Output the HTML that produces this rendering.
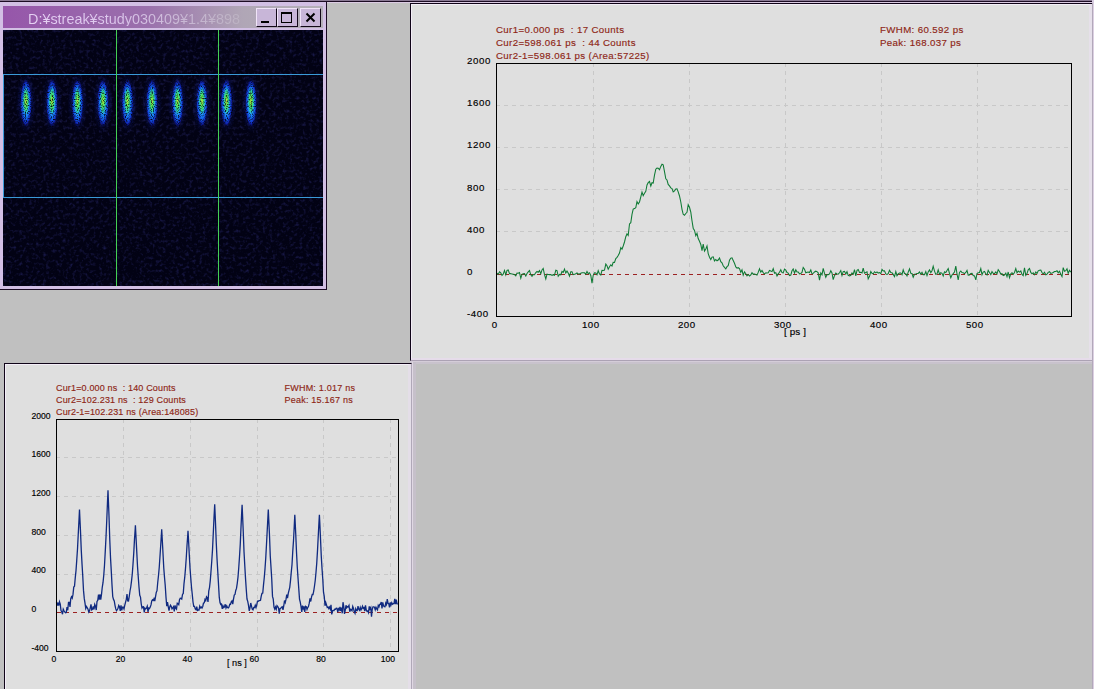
<!DOCTYPE html>
<html><head><meta charset="utf-8"><style>
*{margin:0;padding:0;box-sizing:border-box}
html,body{width:1094px;height:689px;overflow:hidden;background:#c0c0c0;font-family:"Liberation Sans",sans-serif}
.a{position:absolute}
.t{position:absolute;white-space:pre;line-height:1}
.red{color:#8e2616;-webkit-text-stroke:0.15px #8e2616}
.blk{color:#000;-webkit-text-stroke:0.15px #000}
</style></head><body>
<div class="a" style="left:0;top:0;width:1092px;height:1px;background:#8a7a94"></div><div class="a" style="left:1092px;top:0;width:2px;height:5px;background:#d8cce0"></div><div class="a" style="left:0;top:1px;width:1092px;height:1px;background:#1c0c24"></div><div class="a" style="left:0;top:2px;width:1092px;height:1px;background:#dccce4"></div><div class="a" style="left:0;top:2px;width:327px;height:288px;background:#d2bfe4;border-right:1px solid #1a0a22;border-bottom:1px solid #1a0a22"></div><div class="a" style="left:3px;top:6px;width:320px;height:22px;background:linear-gradient(90deg,#9656aa 0%,#9a70ac 45%,#b0a6b6 75%,#b4b0b8 100%)"></div><div class="t" style="left:28px;top:11.5px;font-size:14.4px;color:transparent;background:linear-gradient(90deg,#e6d2f4 0%,#dcc6ec 40%,#cab8d6 70%,#bcb2c2 100%);-webkit-background-clip:text;background-clip:text">D:¥streak¥study030409¥1.4¥898</div><div class="a" style="left:256px;top:8px;width:21px;height:19px;background:#c8b6d8;border-top:1px solid #f0e4f8;border-left:1px solid #f0e4f8;border-right:1px solid #120818;border-bottom:1px solid #120818"></div><div class="a" style="left:277px;top:8px;width:21px;height:19px;background:#c8b6d8;border-top:1px solid #f0e4f8;border-left:1px solid #f0e4f8;border-right:1px solid #120818;border-bottom:1px solid #120818"></div><div class="a" style="left:300px;top:8px;width:21px;height:19px;background:#c8b6d8;border-top:1px solid #f0e4f8;border-left:1px solid #f0e4f8;border-right:1px solid #120818;border-bottom:1px solid #120818"></div><div class="a" style="left:261px;top:21px;width:8px;height:2px;background:#000"></div><div class="a" style="left:281px;top:12px;width:11px;height:11px;border:1px solid #000;border-top-width:2px"></div><svg class="a" style="left:300px;top:8px" width="21" height="19"><path d="M6.5 5.5 L14.5 13.5 M14.5 5.5 L6.5 13.5" stroke="#000" stroke-width="2"/></svg><div class="a" style="left:3px;top:30px;width:320px;height:256px;background:#04031a;overflow:hidden"><svg width="320" height="256" style="position:absolute;left:0;top:0"><defs><radialGradient id="sg" cx="50%" cy="50%" r="50%"><stop offset="0" stop-color="#40d8ff"/><stop offset="0.35" stop-color="#28b0ff"/><stop offset="0.65" stop-color="#1468f0"/><stop offset="0.85" stop-color="#1028b8"/><stop offset="1" stop-color="#0a0a80" stop-opacity="0"/></radialGradient><radialGradient id="hg"><stop offset="0" stop-color="#1830d0" stop-opacity="0.6"/><stop offset="0.6" stop-color="#1428b0" stop-opacity="0.3"/><stop offset="1" stop-color="#1428b0" stop-opacity="0"/></radialGradient><radialGradient id="cg" cx="50%" cy="50%" r="50%"><stop offset="0" stop-color="#c8e838"/><stop offset="0.4" stop-color="#50e858"/><stop offset="0.75" stop-color="#30d890" stop-opacity="0.8"/><stop offset="1" stop-color="#20c0e0" stop-opacity="0"/></radialGradient><filter id="bgn" x="0" y="0" width="100%" height="100%"><feTurbulence type="fractalNoise" baseFrequency="0.3" numOctaves="2" seed="5" result="n"/><feColorMatrix in="n" type="matrix" values="0 0 0 0 0.03  0 0 0 0 0.03  0 0 0 0 0.22  1.2 0 0 0 -0.6"/></filter><filter id="spk" x="0" y="0" width="100%" height="100%"><feTurbulence type="fractalNoise" baseFrequency="0.85" numOctaves="1" seed="9" result="n"/><feColorMatrix in="n" type="matrix" values="0 0 0 0 1  0 0 0 0 1  0 0 0 0 1  3.2 0 0 0 -0.75"/></filter><mask id="mk" maskUnits="userSpaceOnUse" x="0" y="0" width="320" height="256"><rect width="320" height="256" fill="#fff" filter="url(#spk)"/></mask></defs><rect width="320" height="256" fill="#020214"/><rect width="320" height="256" filter="url(#bgn)"/><g mask="url(#mk)"><ellipse cx="23" cy="73" rx="10" ry="30" fill="url(#hg)"/><ellipse cx="23" cy="73" rx="5.8" ry="24" fill="url(#sg)"/><ellipse cx="23" cy="71" rx="3.2" ry="14" fill="url(#cg)"/><ellipse cx="49" cy="73" rx="10" ry="30" fill="url(#hg)"/><ellipse cx="49" cy="73" rx="5.8" ry="24" fill="url(#sg)"/><ellipse cx="49" cy="71" rx="3.2" ry="14" fill="url(#cg)"/><ellipse cx="74.5" cy="73" rx="10" ry="30" fill="url(#hg)"/><ellipse cx="74.5" cy="73" rx="5.8" ry="24" fill="url(#sg)"/><ellipse cx="74.5" cy="71" rx="3.2" ry="14" fill="url(#cg)"/><ellipse cx="100" cy="73" rx="10" ry="30" fill="url(#hg)"/><ellipse cx="100" cy="73" rx="5.8" ry="24" fill="url(#sg)"/><ellipse cx="100" cy="71" rx="3.2" ry="14" fill="url(#cg)"/><ellipse cx="124.5" cy="73" rx="10" ry="30" fill="url(#hg)"/><ellipse cx="124.5" cy="73" rx="5.8" ry="24" fill="url(#sg)"/><ellipse cx="124.5" cy="71" rx="3.2" ry="14" fill="url(#cg)"/><ellipse cx="149" cy="73" rx="10" ry="30" fill="url(#hg)"/><ellipse cx="149" cy="73" rx="5.8" ry="24" fill="url(#sg)"/><ellipse cx="149" cy="71" rx="3.2" ry="14" fill="url(#cg)"/><ellipse cx="174.5" cy="73" rx="10" ry="30" fill="url(#hg)"/><ellipse cx="174.5" cy="73" rx="5.8" ry="24" fill="url(#sg)"/><ellipse cx="174.5" cy="71" rx="3.2" ry="14" fill="url(#cg)"/><ellipse cx="199" cy="73" rx="10" ry="30" fill="url(#hg)"/><ellipse cx="199" cy="73" rx="5.8" ry="24" fill="url(#sg)"/><ellipse cx="199" cy="71" rx="3.2" ry="14" fill="url(#cg)"/><ellipse cx="223.5" cy="73" rx="10" ry="30" fill="url(#hg)"/><ellipse cx="223.5" cy="73" rx="5.8" ry="24" fill="url(#sg)"/><ellipse cx="223.5" cy="71" rx="3.2" ry="14" fill="url(#cg)"/><ellipse cx="248" cy="73" rx="10" ry="30" fill="url(#hg)"/><ellipse cx="248" cy="73" rx="5.8" ry="24" fill="url(#sg)"/><ellipse cx="248" cy="71" rx="3.2" ry="14" fill="url(#cg)"/></g><line x1="0" y1="44.5" x2="320" y2="44.5" stroke="#3a9ad8" stroke-width="1"/><line x1="0" y1="167.5" x2="320" y2="167.5" stroke="#3a9ad8" stroke-width="1"/><line x1="0.5" y1="44" x2="0.5" y2="168" stroke="#3a9ad8" stroke-width="1"/><line x1="113.5" y1="0" x2="113.5" y2="256" stroke="#44d054" stroke-width="1"/><line x1="215.5" y1="0" x2="215.5" y2="256" stroke="#44d054" stroke-width="1"/></svg></div><div class="a" style="left:410px;top:3px;width:682px;height:358px;background:#dfdfdf;border-left:1px solid #100418;border-top:1px solid #100418;border-bottom:1px solid #aca2b4"></div><div class="a" style="left:411px;top:4px;width:681px;height:356px;border-left:1px solid #f4eef8;border-top:1px solid #f4eef8;border-right:3px solid #e6e0ea;border-bottom:2px solid #e6dcea"></div><div class="a" style="left:410px;top:361px;width:682px;height:1px;background:#d4ccd8"></div><div class="a" style="left:410px;top:362px;width:682px;height:2px;background:#c8c2cc"></div><div class="a" style="left:1092px;top:3px;width:1px;height:686px;background:#b2a8ba"></div><div class="a" style="left:1093px;top:3px;width:1px;height:686px;background:#dcd0e2"></div><div class="a" style="left:4px;top:363px;width:408px;height:330px;background:#dfdfdf;border-left:1px solid #100418;border-top:1px solid #100418;border-right:1px solid #b0a8b8"></div><div class="a" style="left:5px;top:364px;width:406px;height:330px;border-left:1px solid #f4eef8;border-top:1px solid #f4eef8;border-right:3px solid #e4dee8"></div><div class="a" style="left:412px;top:362px;width:1px;height:330px;background:#e0d8e4"></div><div class="a" style="left:413px;top:362px;width:3px;height:330px;background:#c6c0ca"></div><div class="t red" style="left:496px;top:25.2px;font-size:9.7px;letter-spacing:0.37px">Cur1=0.000 ps  : 17 Counts</div><div class="t red" style="left:496px;top:38.0px;font-size:9.7px;letter-spacing:0.37px">Cur2=598.061 ps  : 44 Counts</div><div class="t red" style="left:496px;top:50.8px;font-size:9.7px;letter-spacing:0.37px">Cur2-1=598.061 ps (Area:57225)</div><div class="t red" style="left:880px;top:25.2px;font-size:9.7px;letter-spacing:0.37px">FWHM: 60.592 ps</div><div class="t red" style="left:880px;top:38.0px;font-size:9.7px;letter-spacing:0.37px">Peak: 168.037 ps</div><svg class="a" style="left:0;top:0" width="1094" height="689"><line x1="593.5" y1="63" x2="593.5" y2="316" stroke="#c8c8c8" stroke-dasharray="4 4"/><line x1="689.5" y1="63" x2="689.5" y2="316" stroke="#c8c8c8" stroke-dasharray="4 4"/><line x1="785.5" y1="63" x2="785.5" y2="316" stroke="#c8c8c8" stroke-dasharray="4 4"/><line x1="881.5" y1="63" x2="881.5" y2="316" stroke="#c8c8c8" stroke-dasharray="4 4"/><line x1="977.5" y1="63" x2="977.5" y2="316" stroke="#c8c8c8" stroke-dasharray="4 4"/><line x1="496" y1="105.5" x2="1071" y2="105.5" stroke="#c8c8c8" stroke-dasharray="4 4"/><line x1="496" y1="147.5" x2="1071" y2="147.5" stroke="#c8c8c8" stroke-dasharray="4 4"/><line x1="496" y1="189.5" x2="1071" y2="189.5" stroke="#c8c8c8" stroke-dasharray="4 4"/><line x1="496" y1="231.5" x2="1071" y2="231.5" stroke="#c8c8c8" stroke-dasharray="4 4"/><line x1="497" y1="274.5" x2="1071" y2="274.5" stroke="#9c2222" stroke-dasharray="4 4"/><polyline fill="none" stroke="#0e7a34" stroke-width="1.05" points="497.0,273.0 498.2,274.4 499.5,271.8 500.8,272.9 502.0,275.4 503.2,274.2 504.5,270.4 505.8,274.8 507.0,270.4 508.2,269.9 509.5,273.7 510.8,273.5 512.0,274.1 513.2,274.3 514.5,274.6 515.8,275.9 517.0,273.1 518.2,273.2 519.5,272.6 520.8,278.3 522.0,274.4 523.2,273.8 524.5,273.6 525.8,276.0 527.0,273.5 528.2,271.9 529.5,270.6 530.8,274.8 532.0,276.4 533.2,274.5 534.5,274.7 535.8,272.5 537.0,271.5 538.2,272.3 539.5,270.6 540.8,273.7 542.0,269.9 543.2,268.4 544.5,274.7 545.8,279.0 547.0,274.2 548.2,274.4 549.5,274.6 550.8,274.6 552.0,275.4 553.2,274.7 554.5,275.2 555.8,270.2 557.0,270.7 558.2,276.3 559.5,274.4 560.8,274.8 562.0,271.5 563.2,272.5 564.5,269.1 565.8,273.1 567.0,271.1 568.2,273.0 569.5,276.1 570.8,271.8 572.0,271.8 573.2,274.6 574.5,274.3 575.8,273.8 577.0,273.0 578.2,274.0 579.5,274.0 580.8,273.3 582.0,272.8 583.2,272.7 584.5,272.8 585.8,274.2 587.0,271.4 588.2,273.7 589.5,272.7 590.8,275.5 592.0,283.2 593.2,275.3 594.5,272.8 595.8,272.9 597.0,274.8 598.2,270.7 599.5,274.0 600.8,275.0 602.0,270.3 603.2,270.4 604.5,270.1 605.8,264.1 607.0,265.8 608.2,269.2 609.5,266.7 610.8,264.8 612.0,266.0 613.2,262.3 614.5,262.5 615.8,258.6 617.0,257.3 618.2,255.6 619.5,253.1 620.8,247.6 622.0,249.1 623.2,246.0 624.5,242.0 625.8,236.7 627.0,233.9 628.2,235.5 629.5,223.9 630.8,222.7 632.0,214.4 633.2,209.1 634.5,208.6 635.8,207.6 637.0,201.5 638.2,203.9 639.5,202.0 640.8,196.8 642.0,192.1 643.2,195.7 644.5,193.3 645.8,191.3 647.0,184.9 648.2,182.7 649.5,181.5 650.8,186.0 652.0,182.7 653.2,183.1 654.5,175.2 655.8,169.2 657.0,168.1 658.2,168.2 659.5,169.7 660.8,166.4 662.0,164.2 663.2,164.9 664.5,171.6 665.8,178.8 667.0,180.0 668.2,184.4 669.5,185.9 670.8,187.9 672.0,188.6 673.2,192.0 674.5,191.0 675.8,189.0 677.0,188.8 678.2,191.9 679.5,196.0 680.8,202.0 682.0,209.3 683.2,214.3 684.5,215.2 685.8,213.5 687.0,212.3 688.2,204.7 689.5,207.2 690.8,212.1 692.0,220.7 693.2,228.2 694.5,230.4 695.8,235.7 697.0,233.3 698.2,238.6 699.5,241.3 700.8,244.5 702.0,250.7 703.2,244.2 704.5,251.1 705.8,248.9 707.0,246.0 708.2,253.6 709.5,257.2 710.8,259.6 712.0,257.1 713.2,256.9 714.5,260.9 715.8,259.5 717.0,260.8 718.2,260.0 719.5,258.0 720.8,261.6 722.0,262.9 723.2,265.7 724.5,267.4 725.8,268.9 727.0,266.7 728.2,265.7 729.5,260.2 730.8,258.1 732.0,257.8 733.2,260.5 734.5,263.3 735.8,266.9 737.0,268.2 738.2,267.7 739.5,268.5 740.8,272.3 742.0,269.8 743.2,275.1 744.5,271.8 745.8,273.8 747.0,275.8 748.2,274.5 749.5,276.1 750.8,275.0 752.0,272.7 753.2,274.1 754.5,274.0 755.8,274.5 757.0,275.1 758.2,272.4 759.5,268.7 760.8,272.1 762.0,270.5 763.2,272.6 764.5,274.0 765.8,272.7 767.0,272.9 768.2,272.7 769.5,270.5 770.8,271.1 772.0,271.6 773.2,268.6 774.5,273.2 775.8,272.6 777.0,276.0 778.2,273.9 779.5,272.3 780.8,269.7 782.0,272.6 783.2,272.8 784.5,269.1 785.8,270.2 787.0,272.5 788.2,273.1 789.5,275.5 790.8,275.1 792.0,270.8 793.2,268.9 794.5,273.2 795.8,269.7 797.0,272.0 798.2,272.0 799.5,273.9 800.8,273.5 802.0,272.4 803.2,267.5 804.5,269.3 805.8,272.8 807.0,272.2 808.2,272.0 809.5,272.5 810.8,269.9 812.0,273.8 813.2,273.4 814.5,272.0 815.8,271.2 817.0,271.6 818.2,272.8 819.5,280.2 820.8,272.9 822.0,274.8 823.2,268.4 824.5,273.4 825.8,277.3 827.0,274.6 828.2,274.7 829.5,273.9 830.8,270.8 832.0,273.0 833.2,279.7 834.5,275.7 835.8,273.0 837.0,273.9 838.2,274.2 839.5,272.8 840.8,270.6 842.0,275.5 843.2,271.7 844.5,271.3 845.8,274.0 847.0,271.7 848.2,275.3 849.5,276.0 850.8,275.3 852.0,273.0 853.2,274.3 854.5,269.7 855.8,275.9 857.0,270.3 858.2,269.5 859.5,272.4 860.8,272.3 862.0,272.9 863.2,268.2 864.5,273.3 865.8,272.5 867.0,271.9 868.2,278.8 869.5,276.3 870.8,271.5 872.0,273.3 873.2,273.9 874.5,271.7 875.8,272.8 877.0,271.9 878.2,273.1 879.5,272.5 880.8,273.6 882.0,269.4 883.2,270.9 884.5,270.8 885.8,273.9 887.0,274.5 888.2,273.7 889.5,270.3 890.8,272.6 892.0,272.8 893.2,274.4 894.5,276.7 895.8,271.5 897.0,275.7 898.2,273.9 899.5,273.0 900.8,273.0 902.0,274.7 903.2,269.8 904.5,273.5 905.8,273.7 907.0,275.9 908.2,272.1 909.5,268.9 910.8,273.2 912.0,273.5 913.2,277.2 914.5,274.3 915.8,274.1 917.0,273.6 918.2,273.4 919.5,271.9 920.8,274.3 922.0,272.3 923.2,274.8 924.5,274.7 925.8,271.6 927.0,275.6 928.2,271.9 929.5,269.9 930.8,272.6 932.0,270.7 933.2,266.2 934.5,271.1 935.8,274.4 937.0,273.9 938.2,269.9 939.5,274.1 940.8,272.6 942.0,273.3 943.2,276.0 944.5,271.8 945.8,272.6 947.0,270.4 948.2,268.5 949.5,273.5 950.8,277.8 952.0,275.0 953.2,273.6 954.5,272.0 955.8,266.1 957.0,273.8 958.2,279.8 959.5,272.4 960.8,271.0 962.0,272.5 963.2,272.8 964.5,273.6 965.8,272.4 967.0,270.4 968.2,275.1 969.5,274.9 970.8,273.4 972.0,273.3 973.2,275.5 974.5,275.9 975.8,279.9 977.0,273.5 978.2,272.8 979.5,272.5 980.8,268.5 982.0,274.7 983.2,272.1 984.5,271.4 985.8,273.8 987.0,275.0 988.2,270.4 989.5,272.5 990.8,274.6 992.0,271.6 993.2,273.3 994.5,273.6 995.8,272.0 997.0,273.8 998.2,269.6 999.5,271.4 1000.8,274.0 1002.0,273.6 1003.2,275.5 1004.5,275.0 1005.8,273.1 1007.0,276.6 1008.2,272.0 1009.5,277.8 1010.8,273.8 1012.0,272.7 1013.2,274.3 1014.5,272.5 1015.8,268.6 1017.0,272.8 1018.2,271.1 1019.5,272.1 1020.8,271.0 1022.0,274.4 1023.2,275.7 1024.5,267.9 1025.8,275.4 1027.0,273.6 1028.2,269.8 1029.5,268.5 1030.8,272.4 1032.0,273.8 1033.2,272.8 1034.5,274.7 1035.8,272.0 1037.0,273.5 1038.2,270.8 1039.5,270.2 1040.8,270.0 1042.0,272.5 1043.2,274.0 1044.5,272.3 1045.8,274.7 1047.0,274.1 1048.2,272.4 1049.5,271.6 1050.8,273.3 1052.0,273.0 1053.2,272.5 1054.5,271.6 1055.8,271.4 1057.0,270.7 1058.2,272.8 1059.5,271.2 1060.8,274.2 1062.0,276.5 1063.2,267.6 1064.5,271.3 1065.8,270.7 1067.0,268.8 1068.2,273.3 1069.5,270.3 1070.8,272.1"/><rect x="496.5" y="63.5" width="575" height="253" fill="none" stroke="#000"/></svg><div class="t blk" style="left:467px;top:56.0px;font-size:9.7px;letter-spacing:0.6px">2000</div><div class="t blk" style="left:467px;top:98.2px;font-size:9.7px;letter-spacing:0.6px">1600</div><div class="t blk" style="left:467px;top:140.3px;font-size:9.7px;letter-spacing:0.6px">1200</div><div class="t blk" style="left:467px;top:182.5px;font-size:9.7px;letter-spacing:0.6px">800</div><div class="t blk" style="left:467px;top:224.7px;font-size:9.7px;letter-spacing:0.6px">400</div><div class="t blk" style="left:467px;top:266.9px;font-size:9.7px;letter-spacing:0.6px">0</div><div class="t blk" style="left:467px;top:309.0px;font-size:9.7px;letter-spacing:0.6px">-400</div><div class="t blk" style="left:464.5px;width:60px;text-align:center;top:319.6px;font-size:9.7px;letter-spacing:0.5px;text-indent:0.5px">0</div><div class="t blk" style="left:560.5px;width:60px;text-align:center;top:319.6px;font-size:9.7px;letter-spacing:0.5px;text-indent:0.5px">100</div><div class="t blk" style="left:656.5px;width:60px;text-align:center;top:319.6px;font-size:9.7px;letter-spacing:0.5px;text-indent:0.5px">200</div><div class="t blk" style="left:752.5px;width:60px;text-align:center;top:319.6px;font-size:9.7px;letter-spacing:0.5px;text-indent:0.5px">300</div><div class="t blk" style="left:848.5px;width:60px;text-align:center;top:319.6px;font-size:9.7px;letter-spacing:0.5px;text-indent:0.5px">400</div><div class="t blk" style="left:944.5px;width:60px;text-align:center;top:319.6px;font-size:9.7px;letter-spacing:0.5px;text-indent:0.5px">500</div><div class="t blk" style="left:784px;top:326.8px;font-size:9.9px;letter-spacing:0.1px">[ ps ]</div><div class="t red" style="left:56px;top:384.2px;font-size:9.0px;letter-spacing:0.16px">Cur1=0.000 ns  : 140 Counts</div><div class="t red" style="left:56px;top:396.1px;font-size:9.0px;letter-spacing:0.16px">Cur2=102.231 ns  : 129 Counts</div><div class="t red" style="left:56px;top:408.0px;font-size:9.0px;letter-spacing:0.16px">Cur2-1=102.231 ns (Area:148085)</div><div class="t red" style="left:284.5px;top:384.2px;font-size:9.0px;letter-spacing:0.22px">FWHM: 1.017 ns</div><div class="t red" style="left:284.5px;top:396.1px;font-size:9.0px;letter-spacing:0.22px">Peak: 15.167 ns</div><svg class="a" style="left:0;top:0" width="1094" height="689"><line x1="123.5" y1="419" x2="123.5" y2="651" stroke="#c8c8c8" stroke-dasharray="4 4"/><line x1="190.5" y1="419" x2="190.5" y2="651" stroke="#c8c8c8" stroke-dasharray="4 4"/><line x1="257.5" y1="419" x2="257.5" y2="651" stroke="#c8c8c8" stroke-dasharray="4 4"/><line x1="323.5" y1="419" x2="323.5" y2="651" stroke="#c8c8c8" stroke-dasharray="4 4"/><line x1="390.5" y1="419" x2="390.5" y2="651" stroke="#c8c8c8" stroke-dasharray="4 4"/><line x1="56" y1="457.5" x2="398" y2="457.5" stroke="#c8c8c8" stroke-dasharray="4 4"/><line x1="56" y1="496.5" x2="398" y2="496.5" stroke="#c8c8c8" stroke-dasharray="4 4"/><line x1="56" y1="535.5" x2="398" y2="535.5" stroke="#c8c8c8" stroke-dasharray="4 4"/><line x1="56" y1="574.5" x2="398" y2="574.5" stroke="#c8c8c8" stroke-dasharray="4 4"/><line x1="57" y1="612.5" x2="398" y2="612.5" stroke="#9c2222" stroke-dasharray="4 4"/><polyline fill="none" stroke="#102a80" stroke-width="1.3" points="56.50,601.9 57.25,605.6 58.00,602.6 58.75,605.7 59.50,601.9 60.25,604.2 61.00,610.5 61.75,611.8 62.50,614.2 63.25,609.2 64.00,610.8 64.75,611.9 65.50,612.8 66.25,612.6 67.00,607.0 67.75,610.3 68.50,602.3 69.25,602.3 70.00,607.0 70.75,598.7 71.50,596.7 72.25,598.1 73.00,594.4 73.75,587.1 74.50,586.2 75.25,577.9 76.00,570.6 76.75,560.1 77.50,549.0 78.25,534.1 79.00,519.7 79.50,509.5 79.75,515.2 80.50,531.4 81.25,549.9 82.00,563.6 82.75,576.0 83.50,590.4 84.25,598.4 85.00,603.2 85.75,608.4 86.50,606.5 87.25,607.7 88.00,609.2 88.75,612.2 89.50,611.0 90.25,607.8 91.00,604.4 91.75,609.9 92.50,609.2 93.25,606.3 94.00,609.5 94.75,604.4 95.50,606.2 96.25,610.0 97.00,601.5 97.75,600.4 98.50,594.5 99.25,599.7 100.00,594.4 100.75,599.7 101.50,594.4 102.25,587.3 103.00,582.7 103.75,575.2 104.50,565.2 105.25,551.6 106.00,537.2 106.75,520.5 107.50,501.9 108.00,490.3 108.25,496.9 109.00,516.0 109.75,539.2 110.50,557.4 111.25,570.6 112.00,585.0 112.75,596.7 113.50,599.4 114.25,600.9 115.00,605.3 115.75,608.9 116.50,610.7 117.25,609.6 118.00,608.2 118.75,605.4 119.50,606.7 120.25,610.9 121.00,605.4 121.75,610.3 122.50,607.1 123.25,607.1 124.00,609.0 124.75,605.4 125.50,602.4 126.25,599.6 127.00,594.1 127.75,600.8 128.50,600.9 129.25,596.3 130.00,591.0 130.75,587.0 131.50,581.2 132.25,574.2 133.00,564.3 133.75,553.1 134.50,539.1 135.25,528.2 135.40,525.3 136.00,536.9 136.75,551.6 137.50,566.2 138.25,577.0 139.00,587.1 139.75,595.3 140.50,597.1 141.25,604.0 142.00,608.0 142.75,606.9 143.50,606.8 144.25,612.4 145.00,608.1 145.75,608.9 146.50,608.1 147.25,606.2 148.00,611.8 148.75,608.1 149.50,608.6 150.25,607.1 151.00,604.9 151.75,601.0 152.50,599.8 153.25,600.4 154.00,598.6 154.75,601.1 155.50,596.8 156.25,592.5 157.00,590.7 157.75,582.2 158.50,575.5 159.25,567.2 160.00,556.0 160.75,544.7 161.50,532.9 161.70,529.2 162.25,539.3 163.00,553.5 163.75,567.7 164.50,577.2 165.25,585.8 166.00,597.4 166.75,606.1 167.50,602.1 168.25,606.6 169.00,610.6 169.75,607.0 170.50,605.2 171.25,606.6 172.00,608.8 172.75,607.8 173.50,606.7 174.25,611.5 175.00,605.3 175.75,608.2 176.50,609.1 177.25,603.2 178.00,603.6 178.75,604.6 179.50,599.6 180.25,598.2 181.00,598.4 181.75,599.0 182.50,594.4 183.25,593.4 184.00,583.6 184.75,577.2 185.50,568.4 186.25,558.0 187.00,545.5 187.75,535.4 188.00,530.9 188.50,539.2 189.25,554.3 190.00,567.8 190.75,577.9 191.50,587.2 192.25,594.3 193.00,602.0 193.75,606.4 194.50,606.4 195.25,608.9 196.00,609.7 196.75,606.7 197.50,610.5 198.25,610.0 199.00,610.0 199.75,606.2 200.50,607.9 201.25,607.1 202.00,608.0 202.75,606.5 203.50,603.0 204.25,602.8 205.00,599.4 205.75,600.6 206.50,596.8 207.25,597.8 208.00,602.0 208.75,591.1 209.50,587.6 210.25,580.9 211.00,571.2 211.75,561.3 212.50,549.9 213.25,533.9 214.00,517.7 214.70,504.4 214.75,505.5 215.50,522.7 216.25,542.4 217.00,558.4 217.75,571.3 218.50,584.1 219.25,597.2 220.00,602.5 220.75,604.6 221.50,604.1 222.25,608.8 223.00,605.9 223.75,607.6 224.50,606.8 225.25,604.3 226.00,607.9 226.75,606.0 227.50,607.6 228.25,608.0 229.00,606.9 229.75,604.2 230.50,604.4 231.25,601.9 232.00,600.9 232.75,604.1 233.50,599.2 234.25,595.1 235.00,594.5 235.75,590.4 236.50,588.4 237.25,583.3 238.00,577.1 238.75,567.8 239.50,556.8 240.25,544.4 241.00,527.1 241.75,511.4 242.10,504.8 242.50,513.9 243.25,531.7 244.00,551.6 244.75,565.0 245.50,578.1 246.25,589.2 247.00,599.0 247.75,601.3 248.50,605.4 249.25,610.8 250.00,607.8 250.75,603.0 251.50,606.1 252.25,609.2 253.00,609.9 253.75,607.5 254.50,607.6 255.25,605.3 256.00,607.5 256.75,604.8 257.50,601.1 258.25,601.2 259.00,600.6 259.75,600.6 260.50,600.2 261.25,596.1 262.00,593.3 262.75,593.0 263.50,584.9 264.25,577.8 265.00,568.9 265.75,558.0 266.50,544.3 267.25,529.9 268.00,515.2 268.30,509.5 268.75,519.4 269.50,535.5 270.25,555.8 271.00,567.3 271.75,579.3 272.50,596.4 273.25,599.1 274.00,607.2 274.75,609.1 275.50,607.0 276.25,609.2 277.00,605.6 277.75,606.5 278.50,608.0 279.25,613.6 280.00,608.7 280.75,608.2 281.50,607.3 282.25,606.8 283.00,609.8 283.75,606.0 284.50,600.5 285.25,602.5 286.00,599.4 286.75,594.6 287.50,598.2 288.25,593.4 289.00,590.3 289.75,587.3 290.50,580.6 291.25,572.2 292.00,564.7 292.75,551.5 293.50,540.8 294.25,526.3 294.80,514.8 295.00,518.6 295.75,534.3 296.50,552.0 297.25,566.7 298.00,577.7 298.75,588.4 299.50,599.1 300.25,602.1 301.00,606.4 301.75,612.0 302.50,605.7 303.25,608.6 304.00,606.4 304.75,611.9 305.50,606.3 306.25,606.7 307.00,609.4 307.75,607.6 308.50,606.3 309.25,603.2 310.00,598.4 310.75,601.5 311.50,597.1 312.25,594.5 313.00,594.6 313.75,591.0 314.50,586.0 315.25,580.3 316.00,572.3 316.75,563.1 317.50,550.6 318.25,536.0 319.00,521.9 319.40,514.8 319.75,521.8 320.50,538.6 321.25,555.7 322.00,568.3 322.75,578.7 323.50,592.2 324.25,596.4 325.00,605.8 325.75,602.5 326.50,604.9 327.25,607.5 328.00,607.0 328.75,608.5 329.50,607.1 330.25,609.1 331.00,604.9 331.75,614.4 332.50,610.7 333.25,610.4 334.00,610.6 334.75,609.1 335.50,609.2 336.25,608.3 337.00,608.4 337.75,612.0 338.50,608.8 339.25,609.9 340.00,606.8 340.75,611.0 341.50,607.7 342.25,613.3 343.00,602.2 343.75,606.3 344.50,614.0 345.25,610.1 346.00,605.3 346.75,607.8 347.50,606.6 348.25,606.9 349.00,605.4 349.75,611.7 350.50,609.3 351.25,609.8 352.00,610.7 352.75,606.4 353.50,608.4 354.25,611.8 355.00,613.4 355.75,608.8 356.50,610.5 357.25,610.6 358.00,606.1 358.75,609.3 359.50,610.3 360.25,607.4 361.00,610.0 361.75,608.5 362.50,606.2 363.25,608.3 364.00,607.7 364.75,611.2 365.50,605.4 366.25,610.1 367.00,611.3 367.75,610.9 368.50,612.6 369.25,606.3 370.00,609.0 370.75,607.5 371.50,616.7 372.25,609.2 373.00,606.9 373.75,606.8 374.50,607.2 375.25,609.8 376.00,607.3 376.75,608.8 377.50,609.9 378.25,605.5 379.00,606.9 379.75,604.3 380.50,604.1 381.25,602.1 382.00,608.5 382.75,602.3 383.50,605.7 384.25,606.7 385.00,606.8 385.75,603.0 386.50,604.5 387.25,599.2 388.00,603.2 388.75,603.6 389.50,607.5 390.25,602.4 391.00,605.0 391.75,602.8 392.50,604.3 393.25,603.7 394.00,603.6 394.75,598.8 395.50,604.2 396.25,599.6 397.00,603.7 397.75,604.1"/><rect x="56.5" y="419.5" width="342" height="232" fill="none" stroke="#000"/></svg><div class="t blk" style="left:31.4px;top:411.7px;font-size:8.6px">2000</div><div class="t blk" style="left:31.4px;top:450.4px;font-size:8.6px">1600</div><div class="t blk" style="left:31.4px;top:489.0px;font-size:8.6px">1200</div><div class="t blk" style="left:31.4px;top:527.7px;font-size:8.6px">800</div><div class="t blk" style="left:31.4px;top:566.4px;font-size:8.6px">400</div><div class="t blk" style="left:31.4px;top:605.1px;font-size:8.6px">0</div><div class="t blk" style="left:31.4px;top:643.7px;font-size:8.6px">-400</div><div class="t blk" style="left:23.8px;width:60px;text-align:center;top:655px;font-size:8.6px">0</div><div class="t blk" style="left:90.6px;width:60px;text-align:center;top:655px;font-size:8.6px">20</div><div class="t blk" style="left:157.4px;width:60px;text-align:center;top:655px;font-size:8.6px">40</div><div class="t blk" style="left:224.2px;width:60px;text-align:center;top:655px;font-size:8.6px">60</div><div class="t blk" style="left:291.0px;width:60px;text-align:center;top:655px;font-size:8.6px">80</div><div class="t blk" style="left:357.8px;width:60px;text-align:center;top:655px;font-size:8.6px">100</div><div class="t blk" style="left:227px;top:659px;font-size:9.2px">[ ns ]</div></body></html>
